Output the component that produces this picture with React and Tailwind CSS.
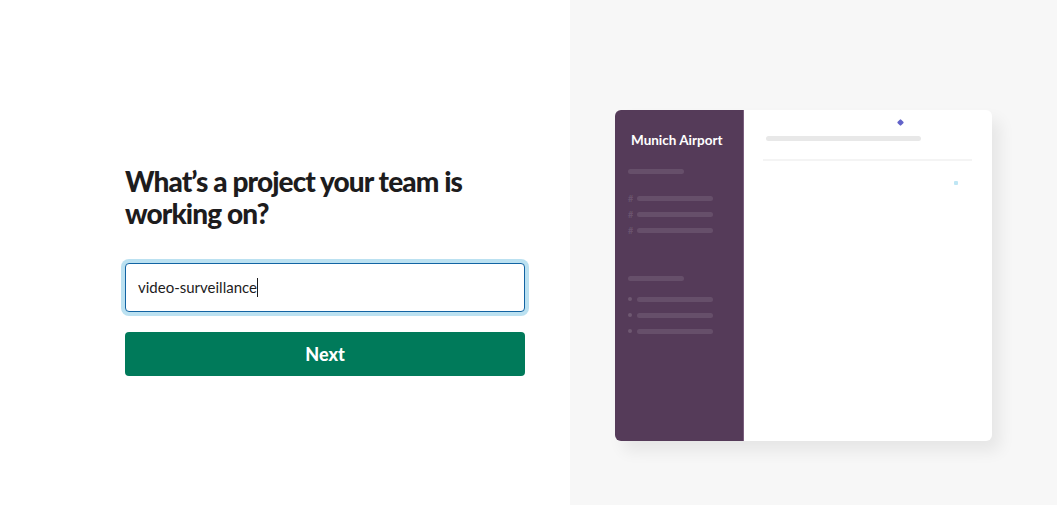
import React from 'react';

const SidebarRow = ({ mark }) => (
  <div className="flex items-center h-[16px]">
    {mark === 'hash' ? (
      <span className="w-[9px] text-[9px] leading-none font-bold text-white/15">#</span>
    ) : (
      <span className="w-[9px] flex items-center">
        <span className="block h-[4px] w-[4px] rounded-full bg-white/15" />
      </span>
    )}
    <span className="block h-[5px] w-[76px] rounded-full bg-white/10" />
  </div>
);

const App = () => {
  return (
    <div className="flex w-full h-[505px] bg-white" style={{ fontFamily: 'Lato, "Open Sans", sans-serif' }}>
      {/* Left: form */}
      <div className="w-[570px] h-full pl-[125px] pt-[165px]">
        <div className="w-[400px]">
          <h1 className="text-[28px] leading-[32px] font-black tracking-[-0.9px] text-[#1d1c1d] mb-[34px]">
            What’s a project your team is working on?
          </h1>

          {/* Input (focused state) */}
          <div className="h-[49px] rounded-[4px] border border-[#1264a3] shadow-[0_0_0_4px_rgba(29,155,209,0.3)] flex items-center px-[12px] bg-white">
            <span className="text-[15px] text-[#1d1c1d]">video-surveillance</span>
            <span className="block w-[1px] h-[19px] bg-[#1d1c1d]" />
          </div>

          <button className="mt-[20px] w-full h-[44px] rounded-[4px] bg-[#007a5a] text-white text-[18px] font-black">
            Next
          </button>
        </div>
      </div>

      {/* Right: preview */}
      <div className="flex-1 h-full bg-[#f7f7f7] pl-[45px] pt-[110px]">
        <div className="relative flex w-[377px] h-[331px] rounded-[6px] bg-white shadow-[8px_10px_16px_rgba(0,0,0,0.07)] overflow-hidden">
          {/* Sidebar */}
          <div className="w-[129px] h-full bg-[#553b59] border-r border-[#7a5f7d] pl-[13px] pt-[22px]">
            <div className="pl-[3px] text-[13.5px] leading-[16px] font-bold text-white">Munich Airport</div>
            <span className="block mt-[21px] h-[5px] w-[56px] rounded-full bg-white/10" />
            <div className="mt-[16px] flex flex-col">
              <SidebarRow mark="hash" />
              <SidebarRow mark="hash" />
              <SidebarRow mark="hash" />
            </div>
            <span className="block mt-[38px] h-[5px] w-[56px] rounded-full bg-white/10" />
            <div className="mt-[10px] flex flex-col">
              <SidebarRow mark="dot" />
              <SidebarRow mark="dot" />
              <SidebarRow mark="dot" />
            </div>
          </div>

          {/* Main pane */}
          <div className="flex-1 h-full pt-[26px] px-[19px]">
            <span className="block ml-[3px] h-[5px] w-[155px] rounded-full bg-[#e8e8e8]" />
            <div className="mt-[18px] h-[2px] w-[209px] bg-[#f4f4f4]" />
          </div>

          {/* Decorative dots */}
          <span className="absolute left-[283px] top-[10px] h-[5px] w-[5px] rotate-45 rounded-[1px] bg-[#6263c9]" />
          <span className="absolute left-[339px] top-[71px] h-[4px] w-[4px] rounded-[1px] bg-[#bfe6f4]" />
        </div>
      </div>
    </div>
  );
};

export default App;
